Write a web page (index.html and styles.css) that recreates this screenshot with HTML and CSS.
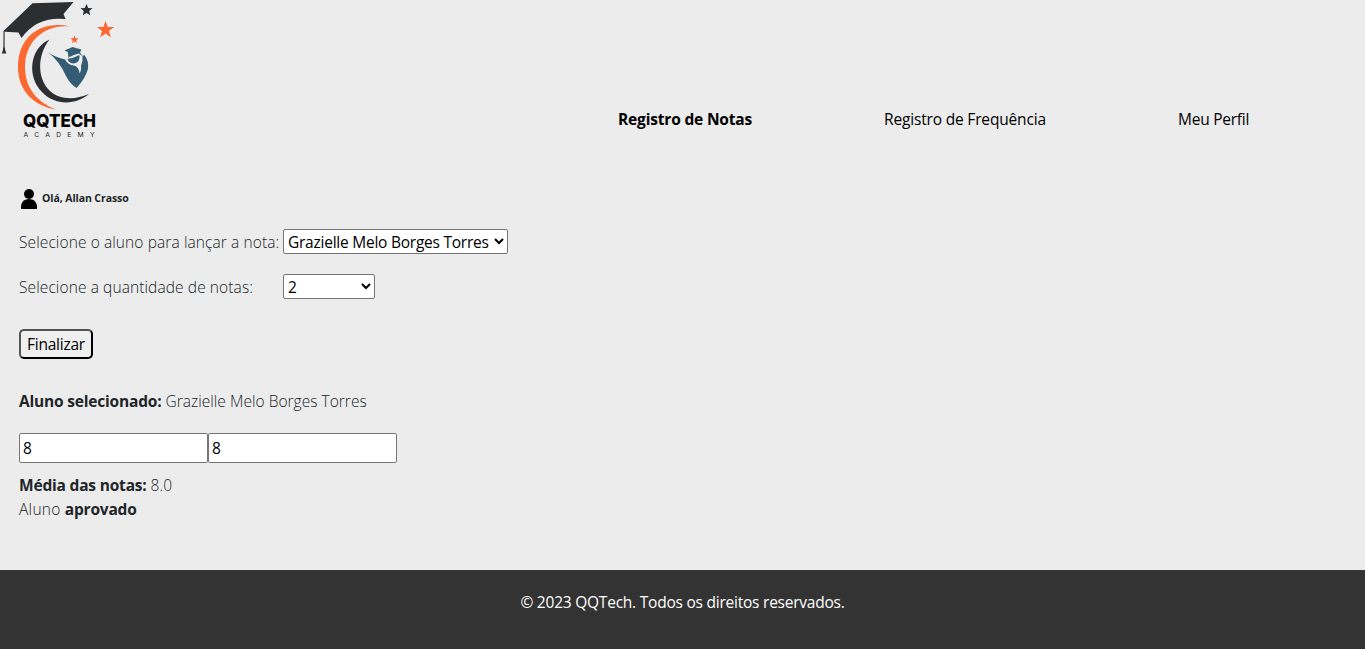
FILE: index.html
```html
<!DOCTYPE html>
<html lang="pt-BR">
<head>
<meta charset="utf-8">
<title>QQTech Academy - Registro de Notas</title>
<link rel="stylesheet" href="styles.css">
</head>
<body>
<header class="header">
  <svg class="logo" viewBox="0 0 120 145" width="120" height="145" role="img" aria-label="QQTech Academy">
    <path class="ink" d="M3.500 31 32.500 3.300 73.500 2 63.500 14 65.500 19Q37 16 21.500 38L18.500 32.500 4.600 31.800V46.500L5.200 50 6.300 53.500H1.800L2.900 50 3.400 46.500Z"/>
    <path class="orange" d="M70 26.500C43 20 18 35 18 67C18 91 34 106 56 109.500C37 102 25 88 25 67C25 41 45 24 70 26.500Z"/>
    <path class="ink" d="M49.500 39.500C29 49 27 77 42 92C55 106 76 105 89 94C75 100 60 100 50 91C37 79 37 55 49.500 39.500Z"/>
    <path class="blue" d="M48 52Q54 57 65 59.500 68 65 74 65.500 79 67 79.500 73.500 81.500 71 81 66 83 61 82.500 56L84.500 55Q89 61 88 69 85 79 76.500 88 70 84 66 76 60 62 48 52Z"/>
    <path class="blue" d="M67.500 58.800Q73 58.500 79.500 55 80.500 62 74 63.500 68.500 63.500 67.500 58.800Z"/>
    <path class="blue" d="M64.500 50.500 72.500 47 81.300 49.500 80 52.500 83 56.500 79 53.500Q74 54.500 68.500 57.500L67.700 52Z"/>
    <path class="ink" d="m86.500 4 1.700 4 4.300.3-3.300 2.800 1.100 4.200-3.800-2.200-3.700 2.200 1-4.200-3.300-2.800 4.300-.3Z"/>
    <path class="orange" d="m105.500 21 2.200 5.900 6.300.2-5 3.900 1.700 6.200-5.200-3.600-5.300 3.600 1.800-6.200-5-3.900 6.300-.2Z"/>
    <path class="orange" d="m74.500 35.500 1.100 2.800 3 .2-2.400 1.900.8 2.900-2.500-1.700-2.500 1.700.8-2.900-2.400-1.900 3-.2Z"/>
    <text class="logo-name" x="23" y="127" textLength="73" lengthAdjust="spacingAndGlyphs">QQTECH</text>
    <text class="logo-sub" x="23.500" y="137" textLength="71">ACADEMY</text>
  </svg>
  <nav class="nav">
    <a class="nav-link active">Registro de Notas</a>
    <a class="nav-link frequency">Registro de Frequência</a>
    <a class="nav-link profile">Meu Perfil</a>
  </nav>
</header>
<main class="content">
  <div class="greeting">
    <svg class="user" viewBox="0 0 18 20" width="18" height="20"><circle cx="9" cy="5" r="5"/><path d="M1 20V17Q2 10 9 10T17 17V20Z"/></svg>
    <span class="hello">Olá, Allan Crasso</span>
  </div>
  <div class="row">
    <label class="label" for="student">Selecione o aluno para lançar a nota:</label>
    <select class="select student" id="student"><option>Grazielle Melo Borges Torres</option></select>
  </div>
  <div class="row">
    <label class="label" for="count">Selecione a quantidade de notas:</label>
    <select class="select count" id="count"><option>2</option></select>
  </div>
  <button class="submit" type="button">Finalizar</button>
  <p class="selected"><b>Aluno selecionado:</b> Grazielle Melo Borges Torres</p>
  <div class="grades"><input class="grade" value="8"><input class="grade" value="8"></div>
  <p class="result"><b>Média das notas:</b> 8.0</p>
  <p class="result"><span class="status">Aluno</span> <b>aprovado</b></p>
</main>
<footer class="footer">© 2023 QQTech. Todos os direitos reservados.</footer>
</body>
</html>
```
FILE: styles.css
```css
* { box-sizing: border-box; }
body {
  margin: 0;
  height: 649px;
  display: flex;
  flex-direction: column;
  overflow: hidden;
  background: #ececec;
  color: #212529;
  font: 300 15.5px/24px "Segoe UI", "Open Sans", sans-serif;
  letter-spacing: 0.03px;
}
p { margin: 0; }
b { font-weight: 700; letter-spacing: -0.19px; }
.header { display: flex; height: 145px; }
.logo { flex: none; display: block; letter-spacing: 0; }
.ink { fill: #2b2f32; }
.orange { fill: #fb6830; }
.blue { fill: #345d75; }
.logo-name { font: 800 17.4px Inter, sans-serif; fill: #000; }
.logo-sub { font: 400 6.8px Inter, sans-serif; fill: #222; }
.nav { display: flex; padding: 107px 0 0 498px; color: #000; font-weight: 400; letter-spacing: -0.17px; white-space: nowrap; }
.nav-link { flex: none; width: 266px; }
.nav-link.active { font-weight: 700; }
.nav-link.frequency { width: 294px; }
.nav-link.profile { width: 90px; letter-spacing: -0.25px; }
.content { flex: none; height: 425px; padding: 43px 19px 0; white-space: nowrap; }
.greeting { display: flex; align-items: center; height: 22px; gap: 4px; padding-left: 1px; }
.user { display: block; fill: #000; }
.hello { padding-bottom: 2px; font-size: 10.5px; font-weight: 700; line-height: 20px; letter-spacing: -0.08px; }
.row { display: flex; align-items: center; height: 25px; margin-top: 19px; }
.row + .row { margin-top: 20px; }
.label { width: 264px; letter-spacing: 0.1px; }
.select { height: 25px; margin: 0; padding: 0; border: 1px solid #767676; border-radius: 2px; background: #fff; color: #000; font: inherit; font-weight: 400; letter-spacing: -0.24px; }
.student { width: 225px; }
.count { width: 92px; }
.submit { display: block; width: 74px; height: 30px; margin-top: 30px; padding: 0; border: 2px outset #000; border-radius: 5px; background: #efefef; color: #000; font: inherit; font-weight: 400; letter-spacing: -0.24px; }
.selected { margin-top: 30px; }
.grades { display: flex; margin: 20px 0 10px; }
.grade { width: 189px; height: 30px; padding: 1px 3px; border: 1px solid #767676; border-radius: 2px; background: #fff; color: #000; font: inherit; font-weight: 400; }
.status { letter-spacing: 0.3px; }
.footer { flex: 1; padding-top: 20px; background: #333; color: #fff; font-weight: 400; text-align: center; letter-spacing: -0.23px; }
```
